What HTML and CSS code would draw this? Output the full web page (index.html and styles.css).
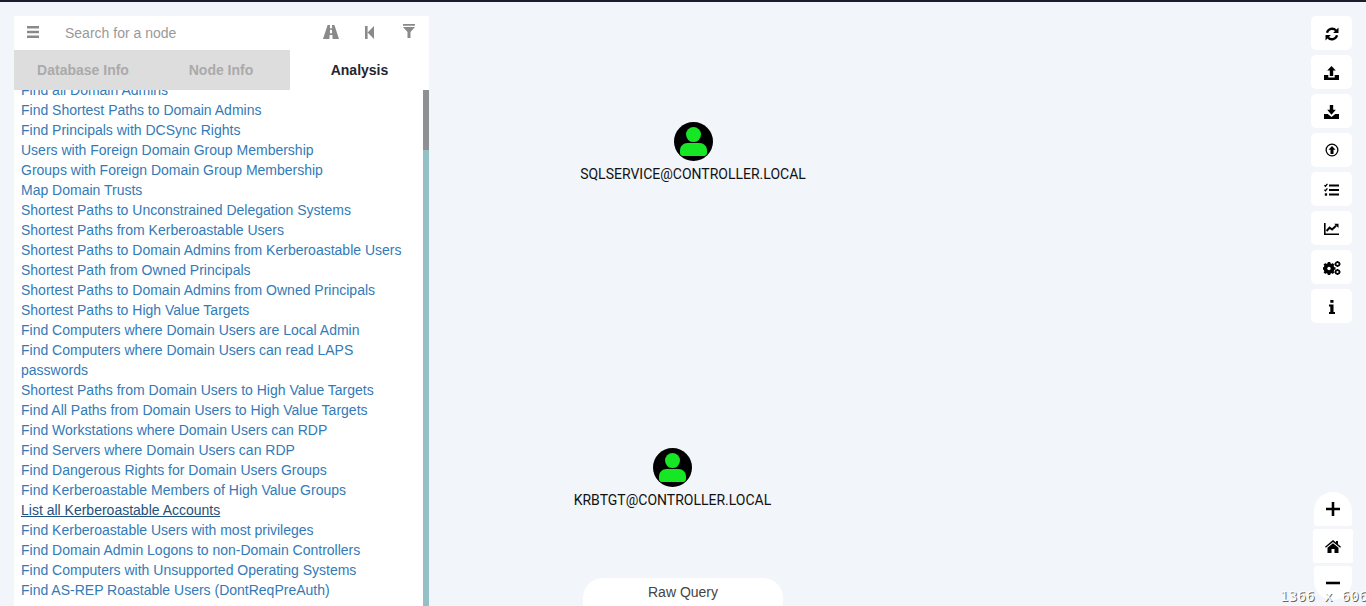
FILE: index.html
```html
<!DOCTYPE html>
<html lang="en">
<head>
    <meta charset="UTF-8">
    <meta name="viewport" content="width=device-width, initial-scale=1.0">
    <title>BloodHound</title>
    <link rel="stylesheet" href="styles.css">
</head>
<body>
    <div class="top-line"></div>

    <div class="app">
        <!-- Left panel with search, tabs and the query list -->
        <div class="sidebar">
            <div class="search-row">
                <svg class="search-icon menu-icon" viewBox="0 0 12 12"><path d="M0 0h12v2.400H0zM0 4.800h12v2.400H0zM0 9.600h12V12H0z"/></svg>
                <input class="search-input" type="text" placeholder="Search for a node">
                <svg class="search-icon road-icon" viewBox="0 0 16 14"><path d="M4.600 0H7l-.1 3.200h2.200L9 0h2.400L16 14H9.600l-.2-4H6.600l-.2 4H0zM7 4.800l-.1 3.400h2.200L9 4.800z"/></svg>
                <svg class="search-icon back-icon" viewBox="0 0 9 13"><path d="M0 0h2.600v13H0zM2.600 6.500L9 0v13z"/></svg>
                <svg class="search-icon filter-icon" viewBox="0 0 12 14"><path d="M0 0h12v1.800H0zM0 3h12L7.500 8v6H4.500V8z"/></svg>
            </div>
            <div class="tabs">
                <div class="tab">Database Info</div>
                <div class="tab">Node Info</div>
                <div class="tab tab-active">Analysis</div>
            </div>
            <div class="query-panel">
                <ul class="query-list">
                    <li><a>Find all Domain Admins</a></li>
                    <li><a>Find Shortest Paths to Domain Admins</a></li>
                    <li><a>Find Principals with DCSync Rights</a></li>
                    <li><a>Users with Foreign Domain Group Membership</a></li>
                    <li><a>Groups with Foreign Domain Group Membership</a></li>
                    <li><a>Map Domain Trusts</a></li>
                    <li><a>Shortest Paths to Unconstrained Delegation Systems</a></li>
                    <li><a>Shortest Paths from Kerberoastable Users</a></li>
                    <li><a>Shortest Paths to Domain Admins from Kerberoastable Users</a></li>
                    <li><a>Shortest Path from Owned Principals</a></li>
                    <li><a>Shortest Paths to Domain Admins from Owned Principals</a></li>
                    <li><a>Shortest Paths to High Value Targets</a></li>
                    <li><a>Find Computers where Domain Users are Local Admin</a></li>
                    <li><a>Find Computers where Domain Users can read LAPS passwords</a></li>
                    <li><a>Shortest Paths from Domain Users to High Value Targets</a></li>
                    <li><a>Find All Paths from Domain Users to High Value Targets</a></li>
                    <li><a>Find Workstations where Domain Users can RDP</a></li>
                    <li><a>Find Servers where Domain Users can RDP</a></li>
                    <li><a>Find Dangerous Rights for Domain Users Groups</a></li>
                    <li><a>Find Kerberoastable Members of High Value Groups</a></li>
                    <li><a class="query-hover">List all Kerberoastable Accounts</a></li>
                    <li><a>Find Kerberoastable Users with most privileges</a></li>
                    <li><a>Find Domain Admin Logons to non-Domain Controllers</a></li>
                    <li><a>Find Computers with Unsupported Operating Systems</a></li>
                    <li><a>Find AS-REP Roastable Users (DontReqPreAuth)</a></li>
                </ul>
                <div class="scrollbar"><div class="scroll-thumb"></div></div>
            </div>
        </div>

        <!-- Graph canvas -->
        <div class="canvas">
            <div class="node node-sql">
                <svg class="node-icon" viewBox="0 0 39 39"><circle cx="19.500" cy="19.500" r="19.500" fill="#000"/><circle cx="19.500" cy="12.600" r="7.500" fill="#17e625"/><path d="M13.500 21h12c4.200 0 7.500 3.300 7.500 7.500V31c0 1.700-1.300 3-3 3H9c-1.700 0-3-1.300-3-3v-2.500C6 24.300 9.300 21 13.500 21z" fill="#17e625"/></svg>
                <div class="node-label">SQLSERVICE@CONTROLLER.LOCAL</div>
            </div>
            <div class="node node-krb">
                <svg class="node-icon" viewBox="0 0 39 39"><circle cx="19.500" cy="19.500" r="19.500" fill="#000"/><circle cx="19.500" cy="12.600" r="7.500" fill="#17e625"/><path d="M13.500 21h12c4.200 0 7.500 3.300 7.500 7.500V31c0 1.700-1.300 3-3 3H9c-1.700 0-3-1.300-3-3v-2.500C6 24.300 9.300 21 13.500 21z" fill="#17e625"/></svg>
                <div class="node-label">KRBTGT@CONTROLLER.LOCAL</div>
            </div>
            <div class="raw-query">Raw Query</div>
        </div>

        <!-- Right side buttons -->
        <div class="right-column">
            <div class="tools">
                <div class="tool-btn"><svg class="tool-icon icon-low" viewBox="0 0 14 14"><path fill="none" stroke="#000" stroke-width="2.300" d="M2 5.800A5.200 5.200 0 0 1 11 3.600M12 8.200A5.200 5.200 0 0 1 3 10.400"/><path d="M13.500.6v5.400H8.100zM.5 13.400V8h5.400z"/></svg></div>
                <div class="tool-btn"><svg class="wide-icon icon-low" viewBox="0 0 15 14"><path d="M7.500 0l4.300 4.600H9.200V10H5.800V4.600H3.200zM0 9h4.300v2.600h6.400V9H15v5H0z"/></svg></div>
                <div class="tool-btn"><svg class="wide-icon icon-low" viewBox="0 0 15 14"><path d="M5.800 0h3.400v4.800h2.600L7.500 9.700 3.200 4.800h2.600zM0 9h3.700l3.800 3 3.800-3H15v5H0z"/></svg></div>
                <div class="tool-btn"><svg class="tool-icon" viewBox="0 0 14 14"><path fill-rule="evenodd" d="M7 .5a6.500 6.500 0 1 1 0 13A6.500 6.500 0 0 1 7 .5zm0 1.300a5.200 5.200 0 1 0 0 10.400A5.200 5.200 0 0 0 7 1.800zM7 3l3.500 3.800H8.500V11h-3V6.800H3.500z"/></svg></div>
                <div class="tool-btn"><svg class="wide-icon icon-low" viewBox="0 0 15 14"><path d="M5 1.400h10v2.200H5zM5 5.900h10v2.200H5zM5 10.400h10v2.200H5z"/><path fill="none" stroke="#000" stroke-width="1.300" d="M.4 2.200l1.100 1L3.400.8M.4 6.700l1.100 1 1.900-2.400"/><path d="M.8 10.300h2.300v2.400H.8z"/></svg></div>
                <div class="tool-btn"><svg class="wide-icon icon-low" viewBox="0 0 15 14"><path d="M0 1h1.600v10.600H15V13H0z"/><path fill="none" stroke="#000" stroke-width="2" d="M2.600 9l3-3.400 2.500 1.900 4-3.800"/><path d="M10.200 1.800H14.500V6z"/></svg></div>
                <div class="tool-btn"><svg class="gear-icon icon-low" viewBox="0 0 18 14"><circle cx="6" cy="7.500" r="3.600" fill="none" stroke="#000" stroke-width="3.600"/><path stroke="#000" stroke-width="2.600" d="M6 1v13M-.5 7.500h13M1.400 2.900l9.200 9.200M10.600 2.900l-9.200 9.200"/><circle cx="6" cy="7.500" r="1.700" fill="#fff"/><circle cx="14.500" cy="3" r="1.900" fill="none" stroke="#000" stroke-width="1.800"/><circle cx="14.500" cy="11" r="1.900" fill="none" stroke="#000" stroke-width="1.800"/><path stroke="#000" stroke-width="1.100" d="M14.500 0v6M11.500 3h6M14.500 8v6M11.500 11h6"/><circle cx="14.500" cy="3" r="1" fill="#fff"/><circle cx="14.500" cy="11" r="1" fill="#fff"/></svg></div>
                <div class="tool-btn"><svg class="info-icon icon-low" viewBox="0 0 6 14"><path d="M1.300 0h3.200v2.800H1.300zM0 4.500h4.500V12H6v2H0v-2h1.300V6.500H0z"/></svg></div>
            </div>
            <div class="zoom-controls">
                <div class="zoom-btn zoom-in"><svg class="tool-icon" viewBox="0 0 12 12"><path d="M4.900 0h2.200v4.900H12v2.200H7.100V12H4.900V7.100H0V4.900h4.900z"/></svg></div>
                <div class="zoom-btn zoom-home"><svg class="home-icon" viewBox="0 0 16 13"><path d="M8 0l3 2.500V1h2v3.200l3 2.600-.8 1L8 1.900.8 7.800 0 6.800zM2.500 7.700L8 3.200l5.500 4.500V13H9.500V9h-3v4h-4z"/></svg></div>
                <div class="zoom-btn zoom-out"><svg class="tool-icon" viewBox="0 0 12 12"><path d="M0 4.900h12v2.200H0z"/></svg></div>
            </div>
        </div>
    </div>

    <div class="size-label">1366 x 606</div>
</body>
</html>
```

FILE: styles.css
```css
html, body {
    height: 100%;
}

body {
    margin: 0;
    overflow: hidden;
    background-color: #f2f5fa;
    font-family: "Liberation Sans", Arial, sans-serif;
    font-size: 14px;
    color: #333;
}

.top-line {
    height: 2px;
    background-color: #1c1f2b;
}

.app {
    display: flex;
    height: 604px;
}

/* Left panel */
.sidebar {
    width: 415px;
    margin: 14px 0 0 14px;
    display: flex;
    flex-direction: column;
    background-color: #fff;
    flex-shrink: 0;
}

.search-row {
    height: 34px;
    display: flex;
    align-items: center;
    flex-shrink: 0;
}

.search-icon {
    display: block;
    fill: #8a8a8a;
    flex-shrink: 0;
}

.menu-icon {
    width: 12px;
    height: 12px;
    margin-left: 13px;
    margin-top: -2px;
}

.search-input {
    flex: 1;
    min-width: 0;
    margin-left: 26px;
    border: none;
    outline: none;
    padding: 0;
    background: transparent;
    font-family: inherit;
    font-size: 14px;
    color: #333;
}

.search-input::placeholder {
    color: #999;
    opacity: 1;
}

.road-icon {
    width: 16px;
    height: 14px;
    margin-top: -2px;
}

.back-icon {
    width: 9px;
    height: 13px;
    margin-left: 26px;
    margin-top: -1px;
}

.filter-icon {
    width: 12px;
    height: 14px;
    margin-left: 29px;
    margin-right: 14px;
    margin-top: -4px;
}

.tabs {
    height: 40px;
    display: flex;
    flex-shrink: 0;
    background-color: #ddd;
    font-weight: bold;
    color: #aaa;
}

.tab {
    width: 138px;
    display: flex;
    align-items: center;
    justify-content: center;
}

.tab-active {
    width: 139px;
    background-color: #fff;
    color: #23252f;
}

.query-panel {
    flex: 1;
    min-height: 0;
    display: flex;
    overflow: hidden;
}

.query-list {
    flex: 1;
    list-style: none;
    margin: -10px 0 0 0;
    padding: 0 7px;
    line-height: 20px;
}

.query-list a {
    color: #337ab7;
}

.query-list a.query-hover {
    color: #23527c;
    text-decoration: underline;
}

.scrollbar {
    width: 6px;
    background-color: #94c1c6;
    flex-shrink: 0;
}

.scroll-thumb {
    height: 60px;
    background-color: #8e9093;
}

/* Graph */
.canvas {
    flex: 1;
    position: relative;
}

.node {
    position: absolute;
    width: 300px;
    display: flex;
    flex-direction: column;
    align-items: center;
}

.node-sql {
    left: 114px;
    top: 120px;
}

.node-krb {
    left: 93.5px;
    top: 446px;
}

.node-icon {
    display: block;
    width: 39px;
    height: 39px;
}

.node-label {
    margin-top: 3px;
    font-family: Roboto, sans-serif;
    font-size: 14px;
    line-height: 20px;
    color: #111;
}

.raw-query {
    position: absolute;
    left: 154px;
    top: 576px;
    width: 200px;
    height: 40px;
    border-radius: 20px 20px 0 0;
    background-color: #fff;
    text-align: center;
    line-height: 28px;
    color: #444;
}

/* Right buttons */
.right-column {
    width: 55px;
    flex-shrink: 0;
    padding-top: 14px;
    padding-bottom: 6px;
    box-sizing: border-box;
    display: flex;
    flex-direction: column;
    justify-content: space-between;
}

.tools {
    display: flex;
    flex-direction: column;
    gap: 5px;
}

.tool-btn {
    width: 41px;
    height: 34px;
    border-radius: 5px;
    background-color: #fff;
    display: flex;
    align-items: center;
    justify-content: center;
}

.tool-icon {
    display: block;
    width: 14px;
    height: 14px;
    fill: #000;
}

.wide-icon {
    display: block;
    width: 15px;
    height: 14px;
    fill: #000;
}

/* these glyphs sit 1px under the middle of the button */
.icon-low {
    margin-top: 2px;
}

.gear-icon {
    display: block;
    width: 18px;
    height: 14px;
}

.info-icon {
    display: block;
    width: 6px;
    height: 14px;
    fill: #000;
}

.home-icon {
    display: block;
    width: 16px;
    height: 13px;
    fill: #000;
}

.zoom-controls {
    display: flex;
    flex-direction: column;
    gap: 3px;
    width: 40px;
    margin-left: 2px;
    align-items: center;
}

.zoom-btn {
    height: 34px;
    width: 38px;
    background-color: #fff;
    display: flex;
    align-items: center;
    justify-content: center;
}

.zoom-in {
    border-radius: 19px 19px 3px 3px;
}

.zoom-home {
    width: 40px;
    border-radius: 3px;
}

.zoom-out {
    border-radius: 3px 3px 19px 19px;
}

/* Screen size stamp in the corner */
.size-label {
    position: absolute;
    left: 1280px;
    top: 587px;
    font-family: "DejaVu Sans Mono", monospace;
    font-size: 14px;
    letter-spacing: 0.35px;
    line-height: 18px;
    white-space: nowrap;
    color: #fff;
    text-shadow: 1px 1px 0 #6b6450;
}
```
